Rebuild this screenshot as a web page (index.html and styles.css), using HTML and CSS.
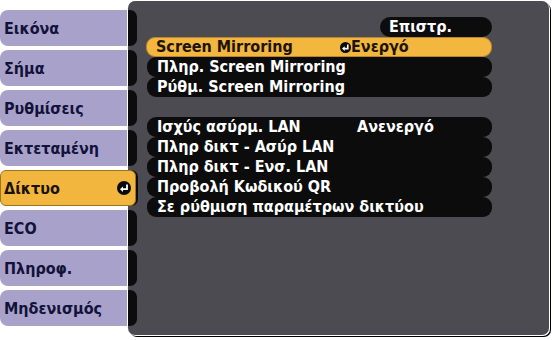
FILE: index.html
```html
<!DOCTYPE html>
<html lang="el">
<head>
<meta charset="utf-8">
<link rel="stylesheet" href="styles.css">
</head>
<body>
<div class="screen">
  <nav class="tabs">
    <div class="tab"><div class="tab-label">Εικόνα</div><div class="tab-link"></div></div>
    <div class="tab"><div class="tab-label">Σήμα</div><div class="tab-link"></div></div>
    <div class="tab"><div class="tab-label">Ρυθμίσεις</div><div class="tab-link"></div></div>
    <div class="tab"><div class="tab-label">Εκτεταμένη</div><div class="tab-link"></div></div>
    <div class="tab active"><div class="tab-label">Δίκτυο
      <svg class="enter-big" viewBox="0 0 14 14" width="14" height="14"><circle cx="7" cy="7" r="7" fill="#0b0b0b"/><path d="M10 3.5V8.2H5.2" fill="none" stroke="#fff" stroke-width="1.8"/><path d="M3 8.2L6 5.4V11Z" fill="#fff"/></svg>
    </div><div class="tab-link"></div></div>
    <div class="tab"><div class="tab-label">ECO</div><div class="tab-link"></div></div>
    <div class="tab"><div class="tab-label">Πληροφ.</div><div class="tab-link"></div></div>
    <div class="tab"><div class="tab-label">Μηδενισμός</div><div class="tab-link"></div></div>
  </nav>
  <main class="panel">
    <div class="line end"><div class="back">Επιστρ.</div></div>
    <div class="row selected"><span class="label">Screen Mirroring</span><span class="value with-icon"><svg class="enter" viewBox="0 0 11 11" width="11" height="11"><circle cx="5.5" cy="5.5" r="5.5" fill="#0b0b0b"/><path d="M7.8 2.5V6.6H4.2" fill="none" stroke="#fff" stroke-width="1.6"/><path d="M2 6.6L4.7 4.2V9Z" fill="#fff"/></svg>Ενεργό</span></div>
    <div class="row"><span class="label">Πληρ. Screen Mirroring</span></div>
    <div class="row"><span class="label">Ρύθμ. Screen Mirroring</span></div>
    <div class="spacer"></div>
    <div class="row"><span class="label">Ισχύς ασύρμ. LAN</span><span class="value">Ανενεργό</span></div>
    <div class="row"><span class="label">Πληρ δικτ - Ασύρ LAN</span></div>
    <div class="row"><span class="label">Πληρ δικτ - Ενσ. LAN</span></div>
    <div class="row"><span class="label">Προβολή Κωδικού QR</span></div>
    <div class="row"><span class="label">Σε ρύθμιση παραμέτρων δικτύου</span></div>
  </main>
</div>
</body>
</html>
```

FILE: styles.css
```css
html, body {
  margin: 0;
  padding: 0;
  background: #ffffff;
}

body {
  width: 554px;
  height: 340px;
  overflow: hidden;
  font-family: "DejaVu Sans Condensed", "DejaVu Sans", "Liberation Sans", sans-serif;
  font-stretch: condensed;
  font-weight: bold;
}

.screen {
  display: flex;
  align-items: flex-start;
}

.tabs {
  position: relative;
  z-index: 1;
  flex: 0 0 138px;
  margin-right: -10px;
  padding-top: 10px;
  display: flex;
  flex-direction: column;
  gap: 4px;
}

.tab {
  display: flex;
  height: 36px;
}

.tab-label {
  flex: 0 0 127px;
  box-sizing: border-box;
  height: 36px;
  padding-left: 4px;
  display: flex;
  align-items: center;
  background: #a8a2ca;
  border-radius: 8px 0 0 8px;
  color: #12123a;
  font-size: 16px;
  white-space: nowrap;
}

.tab-link {
  flex: 0 0 9px;
  margin-left: 1px;
  height: 36px;
  background: #0c0c0c;
  border-radius: 0 7px 7px 0;
}

.tab.active .tab-label {
  position: relative;
  z-index: 1;
  flex-basis: 136px;
  justify-content: space-between;
  padding-left: 3px;
  padding-right: 4px;
  background: #f2b63e;
  border: 1px solid #9c7422;
  border-radius: 6px;
  color: #1a1206;
}

.tab.active .tab-link {
  margin-left: -8px;
  flex-basis: 10px;
}

.enter-big {
  display: block;
}

.panel {
  flex: 0 0 421px;
  box-sizing: border-box;
  height: 334px;
  margin-top: 1px;
  padding: 16px 57px 0 19px;
  background: #4b4b51;
  border-radius: 7px;
  box-shadow: 1px 1px 0 #ffffff, 2px 2px 0 #000000;
  display: flex;
  flex-direction: column;
  font-size: 16px;
  color: #ffffff;
}

.line.end {
  display: flex;
  justify-content: flex-end;
}

.back {
  width: 112px;
  box-sizing: border-box;
  height: 20px;
  line-height: 20px;
  padding-left: 9px;
  background: #0c0c0c;
  border-radius: 10px;
}

.row {
  height: 20px;
  box-sizing: border-box;
  line-height: 20px;
  padding-left: 10px;
  display: grid;
  grid-template-columns: 184px auto;
  background: #0c0c0c;
  border-radius: 9px;
  white-space: nowrap;
}

.value {
  margin-left: 16px;
}

.row.selected {
  background: #f3b63f;
  border: 1px solid #b8862c;
  line-height: 18px;
  padding-left: 9px;
  margin-left: -1px;
  color: #1c1408;
}

.value.with-icon {
  display: flex;
  align-items: center;
  margin-left: 0;
}

.enter {
  display: block;
}

.spacer {
  height: 20px;
}
```
